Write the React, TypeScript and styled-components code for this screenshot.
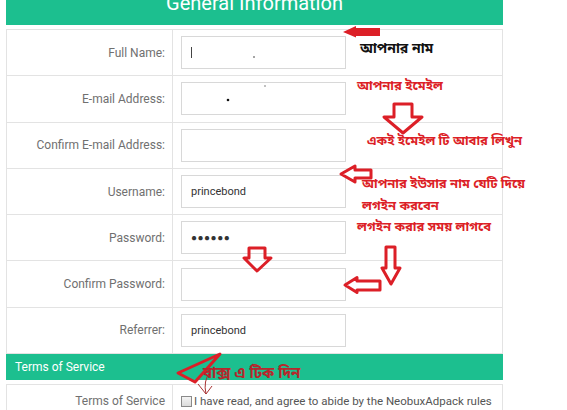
import React from 'react';
import styled, { createGlobalStyle } from 'styled-components';

const GREEN = '#1cbf8f';
const LINE = '#e3e3e3';
const RED = '#dc1f27';

const GlobalStyle = createGlobalStyle`
  html, body {
    margin: 0;
    padding: 0;
    background: #ffffff;
  }
  body {
    font-family: Roboto, 'Liberation Sans', sans-serif;
    overflow: hidden;
  }
`;

const Page = styled.div`
  position: relative;
  width: 567px;
  height: 410px;
  padding-left: 6px;
  box-sizing: border-box;
  overflow: hidden;
`;

const Form = styled.div`
  width: 497px;
  display: flex;
  flex-direction: column;
`;

const Header = styled.div`
  height: 25px;
  background: ${GREEN};
  overflow: hidden;
  display: flex;
  justify-content: center;
`;

const Title = styled.h2`
  margin: -7px 0 0;
  font-size: 20px;
  line-height: 20px;
  font-weight: 400;
  color: #ffffff;
`;

const Table = styled.div`
  margin-top: 4px;
  border: 1px solid ${LINE};
`;

const Row = styled.div<{ $h: number }>`
  display: grid;
  grid-template-columns: 166px 1fr;
  height: ${(p) => p.$h}px;
  & + & {
    border-top: 1px solid ${LINE};
  }
`;

const Label = styled.div`
  display: flex;
  align-items: center;
  justify-content: flex-end;
  padding-right: 7px;
  border-right: 1px solid ${LINE};
  font-size: 12px;
  color: #707070;
`;

const Cell = styled.div`
  display: flex;
  align-items: center;
  padding-left: 8px;
  gap: 2px;
`;

const Field = styled.div<{ $secret?: boolean }>`
  width: 165px;
  height: 33px;
  box-sizing: border-box;
  border: 1px solid #d8d8d8;
  background: #ffffff;
  display: flex;
  align-items: center;
  padding: 0 9px;
  font-size: ${(p) => (p.$secret ? '10px' : '11px')};
  letter-spacing: ${(p) => (p.$secret ? '0.5px' : '0')};
  color: #333333;
`;

const Caret = styled.span`
  width: 1px;
  height: 11px;
  background: #444444;
`;

const Section = styled.div`
  height: 26px;
  background: ${GREEN};
  display: flex;
  align-items: center;
  padding-left: 9px;
  font-size: 12px;
  color: #ffffff;
`;

const Check = styled.span`
  flex: none;
  width: 9px;
  height: 9px;
  border: 1px solid #8a8a8a;
  background: linear-gradient(#f4f4f4, #dcdcdc);
`;

const Agree = styled.span`
  white-space: nowrap;
  font-size: 11.5px;
  color: #555555;
`;

const Overlay = styled.svg`
  position: absolute;
  left: 0;
  top: 0;
  pointer-events: none;
`;

const Note = styled.span<{ $x: number; $y: number; $size: number; $color: string }>`
  position: absolute;
  left: ${(p) => p.$x}px;
  top: ${(p) => p.$y - 9}px;
  line-height: 18px;
  white-space: nowrap;
  font-family: 'Noto Sans Bengali', 'Lohit Bengali', 'Noto Sans', 'FreeSans', sans-serif;
  font-size: ${(p) => p.$size}px;
  font-weight: 700;
  color: ${(p) => p.$color};
`;

const fields = [
  { label: 'Full Name:', value: 'caret' },
  { label: 'E-mail Address:', value: '' },
  { label: 'Confirm E-mail Address:', value: '' },
  { label: 'Username:', value: 'princebond' },
  { label: 'Password:', value: '●●●●●●', secret: true },
  { label: 'Confirm Password:', value: '' },
  { label: 'Referrer:', value: 'princebond' },
];

const notes = [
  { text: 'আপনার নাম', x: 360, y: 50, size: 14, color: '#111111' },
  { text: 'আপনার ইমেইল', x: 357, y: 87, size: 13, color: RED },
  { text: 'একই ইমেইল টি আবার লিখুন', x: 367, y: 142, size: 13, color: RED },
  { text: 'আপনার ইউসার নাম যেটি দিয়ে', x: 362, y: 185, size: 13, color: RED },
  { text: 'লগইন করবেন', x: 362, y: 207, size: 13, color: RED },
  { text: 'লগইন করার সময় লাগবে', x: 357, y: 228, size: 13, color: RED },
  { text: 'বাক্স এ টিক দিন', x: 203, y: 374, size: 15, color: '#b8262c' },
];

const hollow = { fill: 'none', stroke: RED, strokeWidth: 3, strokeLinejoin: 'round' as const };

export default function App() {
  return (
    <>
      <GlobalStyle />
      <Page>
        <Form>
          <Header>
            <Title>General Information</Title>
          </Header>
          <Table>
            {fields.map((f) => (
              <Row key={f.label} $h={45.3}>
                <Label>{f.label}</Label>
                <Cell>
                  <Field $secret={f.secret}>
                    {f.value === 'caret' ? <Caret /> : f.value}
                  </Field>
                </Cell>
              </Row>
            ))}
          </Table>
          <Section>Terms of Service</Section>
          <Table>
            <Row $h={32}>
              <Label>Terms of Service</Label>
              <Cell>
                <Check />
                <Agree>I have read, and agree to abide by the NeobuxAdpack rules</Agree>
              </Cell>
            </Row>
          </Table>
        </Form>

        <Overlay width="567" height="410" viewBox="0 0 567 410">
          <circle cx="254" cy="57" r="0.8" fill="#333" />
          <circle cx="265" cy="86" r="0.7" fill="#555" />
          <circle cx="228" cy="100" r="1.3" fill="#111" />
          <polygon points="343,32 356,26 356,28 380,28 380,36 356,36 356,37.5" fill={RED} />
          <polygon points="394,104 412,104 412,117 422,117 403,133 384,117 394,117" {...hollow} />
          <polygon points="341,174 355,166 355,170 371,170 371,178 355,178 355,182" {...hollow} />
          <polygon points="249,248 265,248 265,258 271,258 257,271 244,258 249,258" {...hollow} />
          <polygon points="386,247 395,247 395,268 400,268 391,284 382,268 386,268" {...hollow} />
          <polygon points="345,285 357,277.5 357,281 380,281 380,290 357,290 357,292.5" {...hollow} />
          <polygon points="220,354 178,373 195,382" {...hollow} />
          <path
            d="M210 372 Q203 381 206 394 M198 384 L206 394 L212 386"
            fill="none"
            stroke="#a83232"
            strokeWidth="1"
          />
        </Overlay>
        {notes.map((n) => (
          <Note key={n.text} $x={n.x} $y={n.y} $size={n.size} $color={n.color}>
            {n.text}
          </Note>
        ))}
      </Page>
    </>
  );
}
